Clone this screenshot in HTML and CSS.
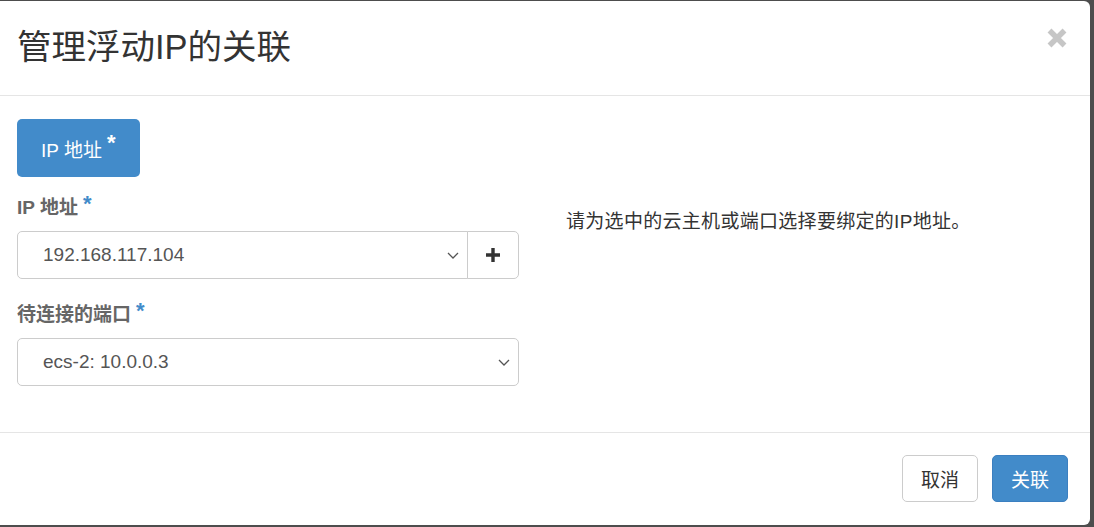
FILE: index.html
```html
<!doctype html>
<html>
    <head>
        <meta charset="utf-8"/>
        <link rel="stylesheet" href="styles.css">
    </head>
    <body>
        <div class="modal">
            <header class="modal-header">
                <h4 class="modal-title">管理浮动IP的关联</h4>
                <button class="close" type="button" aria-label="关闭">
                    <svg width="20" height="20" viewBox="0 0 20 20">
                        <path d="M2.5 2.5 L17.5 17.5 M17.5 2.5 L2.5 17.5" stroke="#c6c6c6" stroke-width="5.5"/>
                    </svg>
                </button>
            </header>
            <section class="modal-body">
                <nav class="tabs">
                    <a class="tab active">IP 地址<sup>*</sup></a>
                </nav>
                <div class="row">
                    <div class="col-form">
                        <div class="form-group">
                            <label class="control-label">IP 地址<sup>*</sup></label>
                            <div class="input-group">
                                <div class="select">
                                    <span>192.168.117.104</span>
                                    <svg width="12" height="7" viewBox="0 0 12 7">
                                        <path d="M1 1 L6 6 L11 1" fill="none" stroke="#555" stroke-width="1.3"/>
                                    </svg>
                                </div>
                                <button class="btn-add" type="button">
                                    <svg width="16" height="16" viewBox="0 0 16 16">
                                        <path d="M8 1 V15 M1 8 H15" stroke="#333" stroke-width="3.4"/>
                                    </svg>
                                </button>
                            </div>
                        </div>
                        <div class="form-group">
                            <label class="control-label">待连接的端口<sup>*</sup></label>
                            <div class="select">
                                <span>ecs-2: 10.0.0.3</span>
                                <svg width="12" height="7" viewBox="0 0 12 7">
                                    <path d="M1 1 L6 6 L11 1" fill="none" stroke="#555" stroke-width="1.3"/>
                                </svg>
                            </div>
                        </div>
                    </div>
                    <div class="col-help">
                        <p>请为选中的云主机或端口选择要绑定的IP地址。</p>
                    </div>
                </div>
            </section>
            <footer class="modal-footer">
                <button class="btn btn-default" type="button">取消</button>
                <button class="btn btn-primary" type="button">关联</button>
            </footer>
        </div>
    </body>
</html>
```

FILE: styles.css
```css
:root {
    --primary: #428bca;
    --text: #333;
    --muted: #666;
    --line: #e5e5e5;
    --border: #ccc;
}

html, body {
    margin: 0;
    height: 100%;
}

body {
    background: #4d4d4d;
    font-family: "Liberation Sans", "Noto Sans CJK SC", sans-serif;
    font-size: 19px;
    color: var(--text);
    overflow: hidden;
}

.modal {
    margin: 1px 0 0 -6px;
    width: 1096px;
    height: 524px;
    background: #fff;
    border-radius: 6px;
    display: flex;
    flex-direction: column;
}

.modal-header {
    height: 94px;
    padding: 0 23px 0 23px;
    border-bottom: 1px solid var(--line);
    display: flex;
    align-items: center;
    justify-content: space-between;
}

.modal-title {
    margin: 0;
    font-size: 34.5px;
    font-weight: normal;
    line-height: 1.2;
    color: var(--text);
}

.close {
    align-self: flex-start;
    margin-top: 27px;
    padding: 0;
    border: 0;
    background: none;
    width: 20px;
    height: 20px;
}

.close svg {
    display: block;
}

.modal-body {
    height: 313px;
    padding: 23px 0 0 23px;
}

.tabs {
    display: flex;
}

.tab {
    height: 58px;
    padding: 0 25px 0 24px;
    display: flex;
    align-items: center;
    border-radius: 5px;
    color: #fff;
    background: var(--primary);
}

sup {
    vertical-align: top;
    line-height: 1;
    font-weight: bold;
    font-size: 22px;
    margin-left: 5px;
    position: relative;
}

.tab sup {
    top: -5px;
}

.row {
    display: flex;
    margin-top: 17px;
}

.col-form {
    width: 502px;
}

.col-help {
    margin-left: 47px;
    padding-top: 15px;
}

.col-help p {
    margin: 0;
    line-height: 26px;
    letter-spacing: 0.3px;
    color: var(--text);
}

.form-group {
    margin-bottom: 22px;
}

.control-label {
    display: block;
    font-weight: bold;
    color: var(--muted);
    line-height: 27px;
    margin-bottom: 10px;
}

.control-label sup {
    color: var(--primary);
    top: -1px;
}

.input-group {
    display: flex;
}

.select {
    box-sizing: border-box;
    height: 48px;
    flex: 1;
    display: flex;
    align-items: center;
    justify-content: space-between;
    padding: 0 8px 0 25px;
    border: 1px solid var(--border);
    border-radius: 5px;
    color: #555;
}

.input-group .select {
    border-radius: 5px 0 0 5px;
}

.btn-add {
    box-sizing: border-box;
    width: 52px;
    height: 48px;
    margin-left: -1px;
    border: 1px solid var(--border);
    border-radius: 0 5px 5px 0;
    background: #fff;
    display: flex;
    align-items: center;
    justify-content: center;
}

.modal-footer {
    border-top: 1px solid var(--line);
    padding: 22px 22px;
    display: flex;
    justify-content: flex-end;
    gap: 14px;
}

.btn {
    box-sizing: border-box;
    width: 76px;
    height: 47px;
    border-radius: 5px;
    font-family: inherit;
    font-size: 19px;
    border: 1px solid var(--border);
}

.btn-default {
    background: #fff;
    color: var(--text);
}

.btn-primary {
    background: var(--primary);
    border-color: #3b7fc0;
    color: #fff;
}
```
